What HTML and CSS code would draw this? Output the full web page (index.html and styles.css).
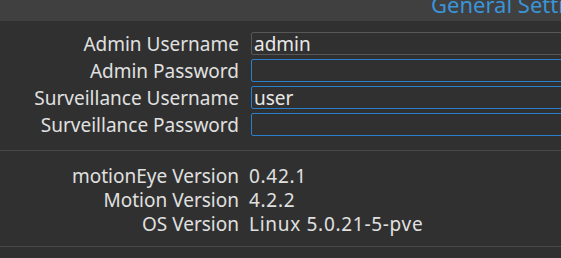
FILE: index.html
```html
<!DOCTYPE html>
<html lang="en">
<head>
  <meta charset="UTF-8">
  <title>motionEye - General Settings</title>
  <link rel="stylesheet" href="styles.css">
</head>
<body>

  <div class="settings-header">
    <span class="settings-title">General Settings</span>
  </div>

  <div class="settings-section">
    <div class="settings-row">
      <span class="settings-label">Admin Username</span>
      <input type="text" class="settings-input" value="admin">
    </div>
    <div class="settings-row">
      <span class="settings-label">Admin Password</span>
      <input type="password" class="settings-input settings-input-blue" value="">
    </div>
    <div class="settings-row">
      <span class="settings-label">Surveillance Username</span>
      <input type="text" class="settings-input settings-input-blue" value="user">
    </div>
    <div class="settings-row">
      <span class="settings-label">Surveillance Password</span>
      <input type="password" class="settings-input settings-input-blue" value="">
    </div>
  </div>

  <div class="settings-section versions">
    <div class="settings-row">
      <span class="settings-label">motionEye Version</span>
      <span class="settings-value">0.42.1</span>
    </div>
    <div class="settings-row">
      <span class="settings-label">Motion Version</span>
      <span class="settings-value">4.2.2</span>
    </div>
    <div class="settings-row">
      <span class="settings-label">OS Version</span>
      <span class="settings-value">Linux 5.0.21-5-pve</span>
    </div>
  </div>

</body>
</html>
```

FILE: styles.css
```css
body {
  margin: 0;
  background: #303030;
  color: #e0e0e0;
  font-family: 'Noto Sans', sans-serif;
  font-size: 19px;
  overflow: hidden;
}

.settings-header {
  height: 21px;
  background: #404040;
  overflow: hidden;
  padding-left: 431px;
  white-space: nowrap;
}

.settings-title {
  display: block;
  color: #3a94d8;
  font-size: 22px;
  line-height: 14px;
  margin-top: -3px;
}

.settings-section {
  padding: 9px 0 12px;
  border-bottom: 1px solid #494949;
}

.settings-row {
  display: grid;
  grid-template-columns: 239px 1fr;
  column-gap: 12px;
  align-items: center;
  height: 27px;
}

.settings-label {
  text-align: right;
  white-space: nowrap;
}

.settings-input {
  box-sizing: border-box;
  width: 420px;
  height: 23px;
  margin: 0;
  padding: 0 2px;
  background-color: #303030;
  color: #e8e8e8;
  border: 1px solid #575757;
  border-radius: 2px;
  font: inherit;
  outline: none;
}

.settings-input-blue {
  border: 1px solid #2a7fca;
  box-shadow: inset 0 0 0 1px #303030;
}

.versions {
  padding: 12px 0 11px;
}

.versions .settings-row {
  height: 24px;
  column-gap: 10px;
}

.settings-value {
  white-space: nowrap;
  letter-spacing: 0.7px;
}
```
